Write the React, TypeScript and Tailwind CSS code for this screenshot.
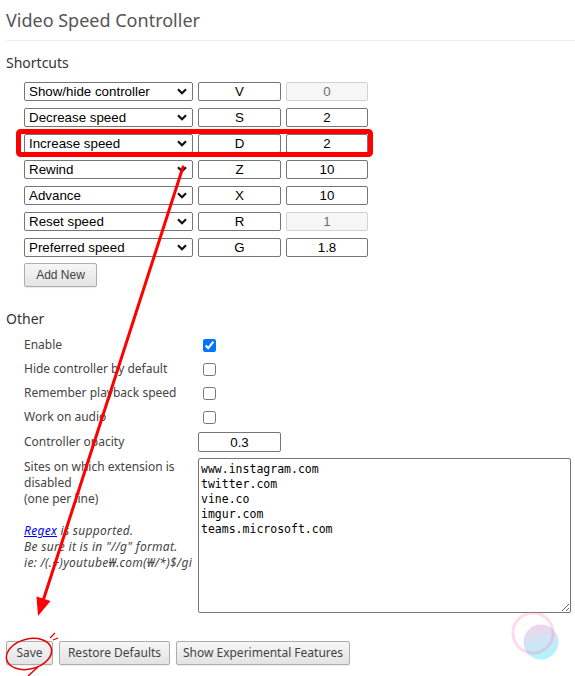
import React from "react";

const shortcuts = [
  { action: "Show/hide controller", key: "V", value: "0", disabled: true },
  { action: "Decrease speed", key: "S", value: "2", disabled: false },
  { action: "Increase speed", key: "D", value: "2", disabled: false },
  { action: "Rewind", key: "Z", value: "10", disabled: false },
  { action: "Advance", key: "X", value: "10", disabled: false },
  { action: "Reset speed", key: "R", value: "1", disabled: true },
  { action: "Preferred speed", key: "G", value: "1.8", disabled: false },
];

const checks = [
  { label: "Enable", checked: true },
  { label: "Hide controller by default", checked: false },
  { label: "Remember playback speed", checked: false },
  { label: "Work on audio", checked: false },
];

function Chevron() {
  return (
    <svg width="10" height="7" viewBox="0 0 10 7" className="absolute right-[6px] top-[6px] pointer-events-none">
      <path d="M1 1.2 L5 5.2 L9 1.2" fill="none" stroke="#111" strokeWidth="2.2" />
    </svg>
  );
}

function Btn({ children, w }: { children: React.ReactNode; w: string }) {
  return (
    <button
      className={`${w} h-[24px] border border-[#adadad] rounded-[2px] bg-gradient-to-b from-[#f6f6f6] to-[#e3e3e3] text-[12px] text-[#444] shadow-[0_1px_1px_rgba(0,0,0,0.08)] flex items-center justify-center`}
    >
      {children}
    </button>
  );
}

export default function App() {
  return (
    <div className="relative w-[575px] h-[676px] overflow-hidden bg-white text-[#444] font-['Noto_Sans',sans-serif]">
      <h1 className="pl-[6px] pt-[8px] text-[18px] leading-[24px] text-[#555] font-normal">Video Speed Controller</h1>
      <div className="ml-[6px] mt-[8px] border-t border-[#ececec]" />

      <h2 className="pl-[6px] mt-[12px] text-[14px] leading-[20px] text-[#333]">Shortcuts</h2>

      <div className="pl-[24px] mt-[9px] flex flex-col gap-[7px] font-['Liberation_Sans',Arial,sans-serif] text-[13.33px] text-black">
        {shortcuts.map((s) => (
          <div key={s.action} className="flex gap-[5px] h-[19px]">
            <div className="relative w-[169px] h-[19px]">
              <select
                defaultValue={s.action}
                className="appearance-none w-full h-full border border-[#767676] rounded-[2px] bg-white pl-[4px] leading-[17px] text-black"
              >
                <option>{s.action}</option>
              </select>
              <Chevron />
            </div>
            <input
              readOnly
              value={s.key}
              className="w-[83px] h-[19px] border border-[#767676] rounded-[2px] text-center text-black"
            />
            <input
              readOnly
              value={s.value}
              disabled={s.disabled}
              className={
                s.disabled
                  ? "w-[82px] h-[19px] border border-[#d2d2d2] rounded-[2px] bg-[#f6f6f6] text-center text-[#6d6d6d]"
                  : "w-[82px] h-[19px] border border-[#767676] rounded-[2px] text-center text-black"
              }
            />
          </div>
        ))}
        <div className="-mt-[1px]">
          <Btn w="w-[73px]">Add New</Btn>
        </div>
      </div>

      <h2 className="pl-[6px] mt-[22px] text-[14px] leading-[20px] text-[#333]">Other</h2>

      <div className="pl-[24px] mt-[4px] text-[12px]">
        {checks.map((c) => (
          <div key={c.label} className="flex items-center h-[24px]">
            <label className="w-[174px]">{c.label}</label>
            <input
              type="checkbox"
              defaultChecked={c.checked}
              className="ml-[5px] w-[13px] h-[13px] accent-[#0075ff]"
            />
          </div>
        ))}
        <div className="flex items-center h-[26px]">
          <label className="w-[174px]">Controller opacity</label>
          <input
            readOnly
            value="0.3"
            className="w-[83px] h-[20px] border border-[#767676] rounded-[2px] text-center text-black font-['Liberation_Sans',Arial,sans-serif] text-[13.33px]"
          />
        </div>
        <div className="flex mt-[3px]">
          <div className="w-[174px] leading-[16px] pt-[1px]">
            <div>Sites on which extension is disabled</div>
            <div>(one per line)</div>
            <div className="mt-[16px] italic tracking-[0.3px]">
              <a className="text-[#0000ee] underline">Regex</a> is supported.
              <br />
              Be sure it is in "//g" format.
              <br />
              ie: /(.+)youtube₩.com(₩/*)$/gi
            </div>
          </div>
          <textarea
            readOnly
            className="w-[373px] h-[155px] border border-[#767676] rounded-[2px] px-[2px] pt-[3px] text-black font-['DejaVu_Sans_Mono',monospace] text-[11.5px] leading-[15px] resize"
            value={"www.instagram.com\ntwitter.com\nvine.co\nimgur.com\nteams.microsoft.com"}
          />
        </div>
      </div>

      <div className="pl-[6px] mt-[28px] flex gap-[6px]">
        <Btn w="w-[47px]">Save</Btn>
        <Btn w="w-[111px]">Restore Defaults</Btn>
        <Btn w="w-[174px]">Show Experimental Features</Btn>
      </div>

      <svg className="absolute inset-0 pointer-events-none" width="575" height="676" viewBox="0 0 575 676">
        <defs>
          <linearGradient id="bub" x1="0" y1="0" x2="0.3" y2="1">
            <stop offset="0" stopColor="#f9a8d4" stopOpacity="0.55" />
            <stop offset="1" stopColor="#67e8f9" stopOpacity="0.5" />
          </linearGradient>
        </defs>
        <rect x="18.5" y="131.5" width="352" height="23" rx="2" fill="none" stroke="#ff0000" strokeWidth="5" />
        <line x1="183" y1="167" x2="43" y2="601" stroke="#ff0000" strokeWidth="3" strokeLinecap="round" />
        <polygon points="38,616 50.5,601 36.5,596.5" fill="#ff0000" />
        <ellipse cx="29" cy="654" rx="23" ry="15" transform="rotate(-14 29 654)" fill="none" stroke="#e60000" strokeWidth="1.5" />
        <line x1="50" y1="638" x2="55" y2="633" stroke="#e60000" strokeWidth="1.2" />
        <line x1="53" y1="640" x2="58" y2="638" stroke="#e60000" strokeWidth="1.2" />
        <line x1="28" y1="676" x2="38" y2="667" stroke="#e60000" strokeWidth="1.5" />
        <circle cx="541" cy="642" r="17.5" fill="url(#bub)" />
        <circle cx="533" cy="633" r="20" fill="none" stroke="#f472b6" strokeOpacity="0.25" strokeWidth="3" />
      </svg>
    </div>
  );
}
